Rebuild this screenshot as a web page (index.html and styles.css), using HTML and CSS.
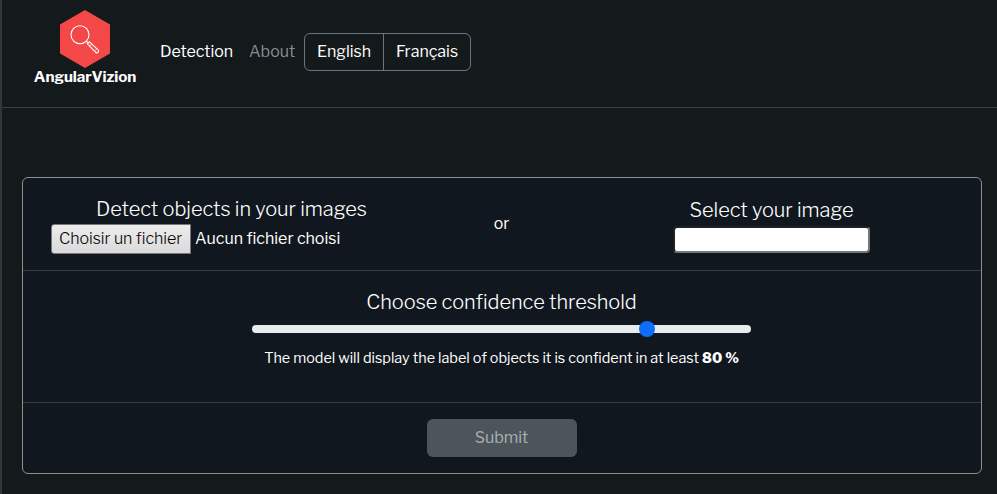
FILE: index.html
```html
<!DOCTYPE html>
<html lang="en">
<head>
<meta charset="utf-8">
<title>AngularVizion</title>
<link rel="stylesheet" href="styles.css">
</head>
<body>
<header class="navbar">
  <a class="brand">
    <svg class="logo" width="50" height="58" viewBox="0 0 50 58">
      <path d="M25 0 50 14.5V43.5L25 58 0 43.5V14.5Z" fill="#f44848"/>
      <g fill="none" stroke="#fff" stroke-width="1.1">
        <circle cx="20" cy="24.8" r="9"/>
        <path d="M26.2 31.2l2.2 2.2"/>
        <path d="M27.3 33.8l2-2 9.2 8.4q.5 2.4-2.2 2.7Z"/>
        <path d="M29.8 35.8l2.3-2.2M35.2 40.2l1.6-1.5" stroke-width=".8"/>
      </g>
    </svg>
    <span class="brand-name">AngularVizion</span>
  </a>
  <nav class="nav">
    <a class="nav-link active">Detection</a>
    <a class="nav-link">About</a>
  </nav>
  <div class="languages">
    <button class="lang lang-en">English</button>
    <button class="lang lang-fr">Français</button>
  </div>
</header>
<main class="card">
  <section class="row sources">
    <div class="upload">
      <h2 class="title title-upload">Detect objects in your images</h2>
      <div class="file"><span class="file-button">Choisir un fichier</span><span class="file-name">Aucun fichier choisi</span></div>
    </div>
    <div class="or">or</div>
    <div class="select">
      <h2 class="title title-select">Select your image</h2>
      <div class="select-box"></div>
    </div>
  </section>
  <section class="row threshold">
    <h2 class="title">Choose confidence threshold</h2>
    <input class="range" type="range" min="0" max="100" step="0.1" value="80.2">
    <p class="hint">The model will display the label of objects it is confident in at least <b>80 %</b></p>
  </section>
  <section class="row actions">
    <button class="submit" disabled>Submit</button>
  </section>
</main>
</body>
</html>
```
FILE: styles.css
```css
* { box-sizing: border-box; }

body {
  margin: 0;
  height: 494px;
  overflow: hidden;
  border-left: 2px solid #333536;
  background: #14191c;
  color: #fff;
  font: 430 16px/24px "Libre Franklin", Inter, "Liberation Sans", sans-serif;
  letter-spacing: -0.02px;
  white-space: nowrap;
}

button { font: inherit; color: inherit; letter-spacing: inherit; }

.navbar {
  display: flex;
  align-items: flex-start;
  height: 108px;
  border-bottom: 1px solid #404345;
}

.brand {
  display: flex;
  flex-direction: column;
  align-items: center;
  width: 104px;
  margin: 10px 22px 0 31px;
}

.brand-name {
  font-size: 15.2px;
  font-weight: 750;
  line-height: 18px;
  letter-spacing: -0.1px;
}

.nav { display: flex; padding-top: 40px; }

.nav-link { width: 89px; padding-left: 1px; color: #8b8e90; }

.nav-link.active { color: #fff; }

.nav-link + .nav-link { width: 56px; }

.languages {
  display: flex;
  height: 38px;
  margin-top: 33px;
  border: 1px solid #6c757d;
  border-radius: 6px;
}

.lang {
  padding: 0 0 1px;
  border: 0;
  background: none;
}

.lang-en { width: 79px; border-right: 1px solid #6c757d; }

.lang-fr { width: 86px; }

.card {
  width: 960px;
  height: 297px;
  margin: 69px 0 0 20px;
  border: 1px solid #8c8f91;
  border-radius: 6px;
  background: #11171e;
}

.row + .row { border-top: 1px solid #3b3d3f; }

.title {
  margin: 0;
  font-size: 20px;
  font-weight: 300;
  line-height: 24px;
  letter-spacing: -0.05px;
}

.sources { display: flex; height: 92px; }

.upload { width: 417px; padding: 19px 0 0 28px; }

.title-upload { margin-left: 45px; }

.file { display: flex; align-items: flex-start; margin-top: 3px; }

.file-button {
  width: 140px;
  height: 30px;
  padding-left: 7px;
  border: 1px solid #777;
  border-radius: 3px 0 0 3px;
  background: linear-gradient(#ececec, #dadada);
  color: #000;
  font-weight: 300;
  line-height: 27px;
}

.file-name { margin-left: 4px; line-height: 29px; }

.or { width: 123px; padding-top: 34px; text-align: center; }

.select { width: 417px; padding-top: 20px; }

.title-select { text-align: center; }

.select-box {
  width: 197px;
  height: 27px;
  margin: 4px auto 0;
  border: 2px solid;
  border-color: #202225 #767676 #767676 #202225;
  border-radius: 4px;
  background: #fff;
}

.threshold {
  display: flex;
  flex-direction: column;
  align-items: center;
  height: 132px;
  padding: 19px 1px 0 0;
}

.range {
  width: 499px;
  height: 24px;
  margin: 3px 0 0;
  appearance: none;
  background: none;
}

.range::-webkit-slider-runnable-track {
  height: 8px;
  border-radius: 8px;
  background: #e9ecef;
}

.range::-webkit-slider-thumb {
  width: 16px;
  height: 16px;
  margin-top: -4px;
  appearance: none;
  border-radius: 50%;
  background: #0d6efd;
}

.hint { margin: 5px 0 0; font-size: 14.4px; }

.hint b { font-weight: 800; }

.actions { display: flex; justify-content: center; padding-top: 16px; }

.submit {
  width: 150px;
  height: 38px;
  padding: 0 1px 1px 0;
  border: 0;
  border-radius: 6px;
  background: #4c555c;
  color: #abafb2;
}
```
